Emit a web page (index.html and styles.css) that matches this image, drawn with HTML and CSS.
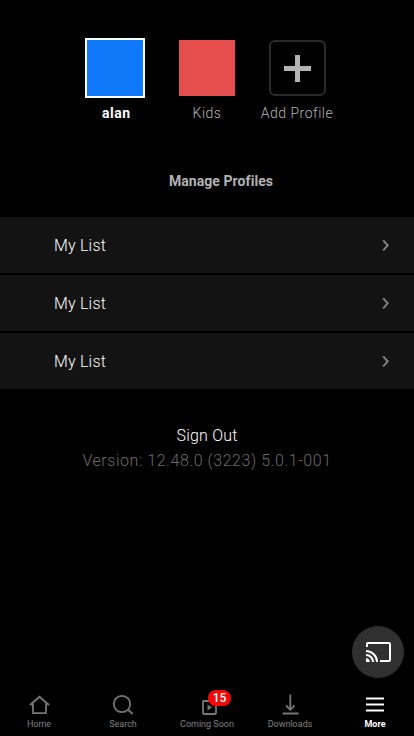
FILE: index.html
```html
<!DOCTYPE html>
<html lang="en">
<head>
<meta charset="utf-8">
<meta name="viewport" content="width=device-width, initial-scale=1">
<title>More</title>
<link rel="stylesheet" href="styles.css">
</head>
<body>
<div class="screen">
  <section class="profiles">
    <div class="profile active"><div class="avatar blue"></div><span class="name">alan</span></div>
    <div class="profile"><div class="avatar red"></div><span class="name">Kids</span></div>
    <div class="profile add"><div class="avatar plus"><svg width="27" height="27" viewBox="0 0 27 27"><path d="M11 0h5v11h11v5H16v11h-5V16H0v-5h11z" fill="#b3b3b3"/></svg></div><span class="name">Add Profile</span></div>
  </section>
  <div class="manage">Manage Profiles</div>
  <ul class="menu">
    <li><span>My List</span><svg width="8" height="12" viewBox="0 0 8 12"><path d="M1.200 1.300l4.500 5-4.500 5"/></svg></li>
    <li><span>My List</span><svg width="8" height="12" viewBox="0 0 8 12"><path d="M1.200 1.300l4.500 5-4.500 5"/></svg></li>
    <li><span>My List</span><svg width="8" height="12" viewBox="0 0 8 12"><path d="M1.200 1.300l4.500 5-4.500 5"/></svg></li>
  </ul>
  <div class="signout">Sign Out</div>
  <div class="version">Version: 12.48.0 (3223) 5.0.1-001</div>
  <button class="cast" aria-label="Cast">
    <svg width="26" height="22" viewBox="0 0 26 22" fill="none" stroke="#fff" stroke-width="2"><path d="M2 6V3q0-1 1-1h21q1 0 1 1v16q0 1-1 1h-9"/><path d="M1 10a11 11 0 0 1 11 11M1 14a7 7 0 0 1 7 7"/><path d="M1 17.300a3.700 3.700 0 0 1 3.700 3.700H1z" fill="#fff" stroke="none"/></svg>
  </button>
  <nav class="tabs">
    <a><svg width="24" height="24" viewBox="0 0 24 24"><path d="M3 13l9.500-8.200L22 13M5.800 11.300l.3 9.900h12.800l.3-9.900"/></svg><span>Home</span></a>
    <a><svg width="24" height="24" viewBox="0 0 24 24"><circle cx="11" cy="12" r="8.200"/><path d="M16.800 17.500l4.900 4.500"/></svg><span>Search</span></a>
    <a><svg width="24" height="24" viewBox="0 0 24 24"><rect x="8" y="9" width="13" height="13" rx="1"/><path d="M12.500 12.500v6l4.500-3z" class="solid"/></svg><b class="badge">15</b><span>Coming Soon</span></a>
    <a class="downloads"><svg width="24" height="24" viewBox="0 0 24 24"><path d="M12.300 2.500v15M8 13.500l4.300 4.300 4.300-4.300M4.500 21.500h16"/></svg><span>Downloads</span></a>
    <a class="current"><svg width="24" height="24" viewBox="0 0 24 24"><path d="M3 6.500h18M3 12.500h18M3 18.500h18"/></svg><span>More</span></a>
  </nav>
</div>
</body>
</html>
```
FILE: styles.css
```css
* { box-sizing: border-box; }
body { margin: 0; background: #000; font-family: Roboto, "Liberation Sans", sans-serif; color: #fff; }
.screen { position: relative; display: flex; flex-direction: column; width: 414px; height: 736px; padding-top: 38px; overflow: hidden; }
.profiles { display: flex; justify-content: center; gap: 11px; height: 85px; }
.profile { display: flex; flex-direction: column; align-items: center; width: 80px; }
.profile.active { align-items: flex-start; padding-left: 9px; }
.profile.add { padding-right: 2px; }
.avatar { width: 60px; height: 60px; border: 2px solid transparent; background-clip: padding-box; }
.active .avatar { border-color: #fff; }
.blue { background-color: #0f79fa; }
.red { background-color: #e64e4d; }
.avatar.plus { display: flex; align-items: center; justify-content: center; width: 57px; height: 56px; margin: 2px 0; border-color: #2b2b2b; border-radius: 6px; }
.name { margin-top: 7px; font-size: 14px; line-height: 16px; letter-spacing: .5px; font-weight: 300; color: #b3b3b3; white-space: nowrap; }
.active .name { margin-left: 17px; font-weight: 700; color: #fff; }
.manage { margin-top: 50px; padding-left: 28px; text-align: center; font-size: 14px; line-height: 16px; font-weight: 700; letter-spacing: .07px; color: #b3b3b3; }
.menu { display: flex; flex-direction: column; gap: 2px; margin: 28px 0 0; padding: 0; list-style: none; }
.menu li { display: flex; align-items: center; justify-content: space-between; height: 56px; padding: 0 24px 0 54px; background: #131313; font-size: 16px; letter-spacing: .2px; font-weight: 300; }
.menu path { fill: none; stroke: #858585; stroke-width: 1.900; }
.signout { margin-top: 37px; text-align: center; font-size: 16px; line-height: 20px; letter-spacing: .2px; font-weight: 300; }
.version { margin-top: 5px; text-align: center; font-size: 16px; line-height: 20px; letter-spacing: .55px; font-weight: 300; color: #6c6c6c; }
.cast { position: absolute; top: 626px; right: 10px; display: flex; align-items: center; justify-content: center; width: 52px; height: 52px; padding: 0; border: 0; border-radius: 50%; background: #303030; }
.tabs { display: grid; grid-template-columns: repeat(5, 84px); margin: auto -3px 0; height: 44px; }
.tabs a { position: relative; display: flex; flex-direction: column; align-items: center; font-size: 9px; line-height: 12px; color: #808080; }
.tabs svg { fill: none; stroke: #777; stroke-width: 1.800; }
.tabs span { margin-top: 2px; }
.tabs .downloads { padding-right: 2px; }
.tabs .solid { fill: #777; stroke: none; }
.tabs .current { color: #fff; font-weight: 700; }
.tabs .current svg { stroke: #fff; stroke-width: 2; }
.badge { position: absolute; top: -2px; left: 43px; width: 23px; height: 16px; border-radius: 8px; background: #f60707; color: #fff; font-size: 12px; line-height: 16px; text-align: center; font-weight: 500; }
```
